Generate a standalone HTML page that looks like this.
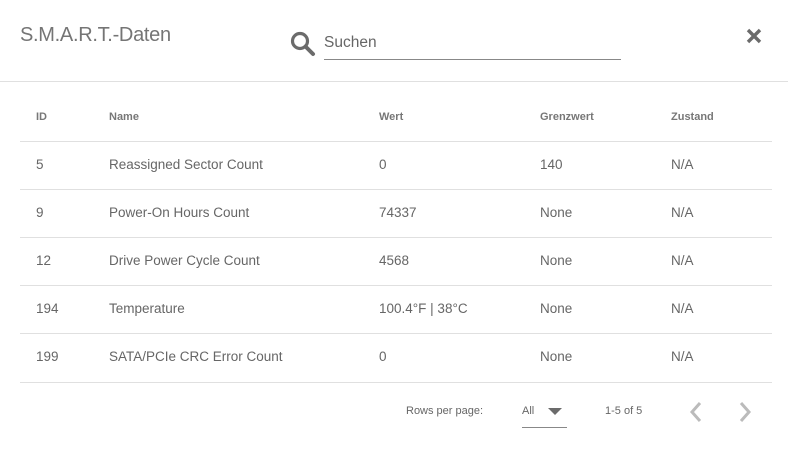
<!DOCTYPE html>
<html><head><meta charset="utf-8"><style>
body{margin:0;width:788px;height:466px;background:#fff;font-family:"Liberation Sans",sans-serif;color:#666;position:relative;overflow:hidden}
.a{position:absolute;white-space:nowrap}
.hr{position:absolute;left:20px;width:752px;height:1px;background:#e0e0e0}
.h{font-size:11px;font-weight:bold;color:#777;top:111px}
.r{font-size:13.5px;color:#666}
</style></head><body>
<div class="a" style="left:20px;top:24px;font-size:20px;color:#757575;letter-spacing:-0.3px">S.M.A.R.T.-Daten</div>
<svg class="a" style="left:290px;top:31px" width="26" height="26" viewBox="0 0 26 26"><circle cx="10" cy="10" r="7.5" fill="none" stroke="#6b6b6b" stroke-width="3.2"/><line x1="15.5" y1="15.5" x2="23" y2="23" stroke="#6b6b6b" stroke-width="4" stroke-linecap="round"/></svg>
<div class="a" style="left:324px;top:34px;font-size:15.5px;color:#666">Suchen</div>
<div class="a" style="left:324px;top:59px;width:297px;height:1px;background:#888"></div>
<svg class="a" style="left:745px;top:27px" width="18" height="18" viewBox="0 0 18 18"><path d="M3 3L15 15M15 3L3 15" stroke="#6b6b6b" stroke-width="3.4"/></svg>
<div class="a" style="left:0;top:81px;width:788px;height:1px;background:#e0e0e0"></div>
<div class="a h" style="left:36px">ID</div><div class="a h" style="left:109px">Name</div><div class="a h" style="left:379px">Wert</div><div class="a h" style="left:540px">Grenzwert</div><div class="a h" style="left:671px">Zustand</div>
<div class="hr" style="top:141px"></div><div class="hr" style="top:189px"></div><div class="hr" style="top:237px"></div><div class="hr" style="top:285px"></div><div class="hr" style="top:333px"></div><div class="hr" style="top:382px"></div>
<div class="a r" style="left:36px;top:157px">5</div><div class="a r" style="left:109px;top:157px">Reassigned Sector Count</div><div class="a r" style="left:379px;top:157px">0</div><div class="a r" style="left:540px;top:157px">140</div><div class="a r" style="left:671px;top:157px">N/A</div>
<div class="a r" style="left:36px;top:205px">9</div><div class="a r" style="left:109px;top:205px">Power-On Hours Count</div><div class="a r" style="left:379px;top:205px">74337</div><div class="a r" style="left:540px;top:205px">None</div><div class="a r" style="left:671px;top:205px">N/A</div>
<div class="a r" style="left:36px;top:253px">12</div><div class="a r" style="left:109px;top:253px">Drive Power Cycle Count</div><div class="a r" style="left:379px;top:253px">4568</div><div class="a r" style="left:540px;top:253px">None</div><div class="a r" style="left:671px;top:253px">N/A</div>
<div class="a r" style="left:36px;top:301px">194</div><div class="a r" style="left:109px;top:301px">Temperature</div><div class="a r" style="left:379px;top:301px">100.4°F | 38°C</div><div class="a r" style="left:540px;top:301px">None</div><div class="a r" style="left:671px;top:301px">N/A</div>
<div class="a r" style="left:36px;top:349px">199</div><div class="a r" style="left:109px;top:349px">SATA/PCIe CRC Error Count</div><div class="a r" style="left:379px;top:349px">0</div><div class="a r" style="left:540px;top:349px">None</div><div class="a r" style="left:671px;top:349px">N/A</div>
<div class="a" style="left:406px;top:405px;font-size:11px">Rows per page:</div>
<div class="a" style="left:522px;top:405px;font-size:11px">All</div>
<svg class="a" style="left:547px;top:407px" width="16" height="9"><path d="M1 1L15 1L8 8Z" fill="#6b6b6b"/></svg>
<div class="a" style="left:522px;top:427px;width:45px;height:1px;background:#888"></div>
<div class="a" style="left:605px;top:405px;font-size:11px">1-5 of 5</div>
<svg class="a" style="left:688px;top:401px" width="16" height="22"><path d="M12 2L4 11L12 20" fill="none" stroke="#bbb" stroke-width="3"/></svg>
<svg class="a" style="left:737px;top:401px" width="16" height="22"><path d="M4 2L12 11L4 20" fill="none" stroke="#bbb" stroke-width="3"/></svg>
</body></html>
